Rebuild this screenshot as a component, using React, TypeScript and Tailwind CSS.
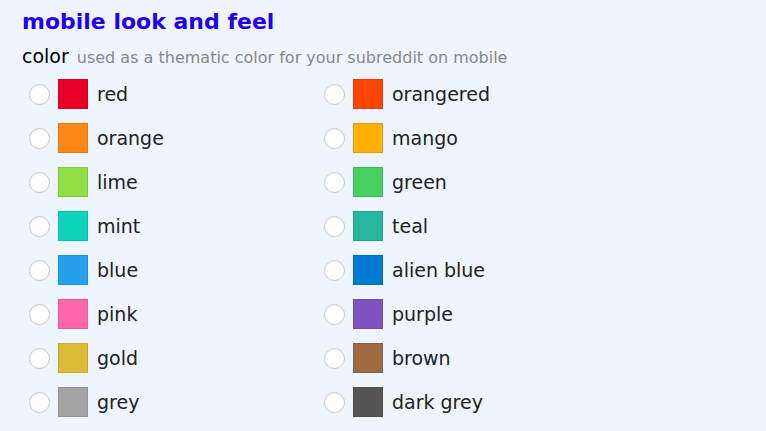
const colors: [string, string][] = [
  ["red", "#ea0027"],
  ["orangered", "#ff4500"],
  ["orange", "#ff8717"],
  ["mango", "#ffb000"],
  ["lime", "#94e044"],
  ["green", "#46d160"],
  ["mint", "#0dd3bb"],
  ["teal", "#25b79f"],
  ["blue", "#24a0ed"],
  ["alien blue", "#0079d3"],
  ["pink", "#ff66ac"],
  ["purple", "#7e53c1"],
  ["gold", "#ddbd37"],
  ["brown", "#a06a42"],
  ["grey", "#a5a4a4"],
  ["dark grey", "#545452"],
];

const ColorOption = ({ name, hex }: { name: string; hex: string }) => (
  <label className="flex h-[44px] items-center">
    <span className="h-[21px] w-[21px] rounded-full border border-[#c8c8c8] bg-white shadow-[inset_0_1px_1px_rgba(0,0,0,0.05)]" />
    <span
      className="ml-[8px] h-[30px] w-[30px] border border-black/10"
      style={{ backgroundColor: hex }}
    />
    <span className="ml-[9px] text-[19px] text-[#222]">{name}</span>
  </label>
);

export default function App() {
  return (
    <div
      className="h-[431px] w-[766px] bg-[#eef5fe] pl-[22px] pt-[7px]"
      style={{ fontFamily: '"DejaVu Sans", Verdana, sans-serif' }}
    >
      <h2 className="text-[22px] font-bold leading-[30px] text-[#2200ee]">
        mobile look and feel
      </h2>
      <div className="mt-[6px] flex items-baseline gap-[8px] leading-[26px]">
        <span className="text-[19px] text-black">color</span>
        <span className="text-[16px] text-[#888]">
          used as a thematic color for your subreddit on mobile
        </span>
      </div>
      <div className="mt-[1px] grid w-[597px] grid-cols-2 pl-[7px]">
        {colors.map(([name, hex]) => (
          <ColorOption key={name} name={name} hex={hex} />
        ))}
      </div>
    </div>
  );
}
